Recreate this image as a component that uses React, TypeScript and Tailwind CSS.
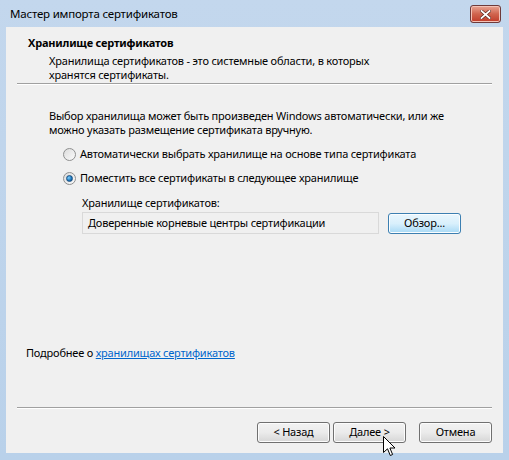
import React from "react";

const font = { fontFamily: '"Noto Sans", "Open Sans", sans-serif' };

const Radio = ({ checked }: { checked?: boolean }) => (
  <span className="relative inline-flex h-[13px] w-[13px] shrink-0 items-center justify-center rounded-full border border-[#8e8f8f] bg-gradient-to-br from-[#dcdcdc] to-[#fbfbfb]">
    {checked && (
      <span className="h-[7px] w-[7px] rounded-full border border-[#1b4f80] bg-[radial-gradient(circle_at_35%_35%,#7fd0ff,#1a73b8_60%,#0d4a86)]" />
    )}
  </span>
);

const WizButton = ({ children }: { children: React.ReactNode }) => (
  <button className="h-[21px] w-[73px] rounded-[3px] border border-[#707070] bg-gradient-to-b from-[#f2f2f2] via-[#ebebeb] to-[#d6d6d6] text-[11px] tracking-[-0.2px] text-black shadow-[inset_0_0_0_1px_#fcfcfc]">
    {children}
  </button>
);

const Separator = () => (
  <div className="mx-[11px] h-[2px] border-t border-[#a0a0a0] border-b border-b-white" />
);

export default function App() {
  return (
    <div
      className="relative flex h-[460px] w-[509px] flex-col bg-gradient-to-b from-[#c3d7ed] to-[#b9d1ea] text-[11px] tracking-[-0.2px] text-black"
      style={font}
    >
      {/* title bar */}
      <div className="flex h-[27px] items-center justify-between pl-[10px] pr-[8px]">
        <span className="text-[11.5px] text-black">Мастер импорта сертификатов</span>
        <button className="mt-[1px] flex h-[18px] w-[31px] items-center justify-center rounded-[3px] border border-[#6e3a3a] bg-gradient-to-b from-[#e8a493] via-[#d0644e] to-[#c03a28] shadow-[inset_0_0_0_1px_#f4c2b6]">
          <svg width="11" height="9" viewBox="0 0 11 9">
            <path d="M1.5 1 L9.5 8 M9.5 1 L1.5 8" stroke="#5a2a22" strokeWidth="3.2" strokeLinecap="square" />
            <path d="M1.5 1 L9.5 8 M9.5 1 L1.5 8" stroke="#ffffff" strokeWidth="1.8" strokeLinecap="square" />
          </svg>
        </button>
      </div>

      {/* client area */}
      <div className="mx-[6px] mb-[7px] flex flex-1 flex-col bg-[#f0f0f0]">
        <div className="pl-[22px] pt-[8px]">
          <div className="font-bold leading-[16px]">Хранилище сертификатов</div>
          <div className="mt-[3px] pl-[21px] leading-[14px]">
            Хранилища сертификатов - это системные области, в которых
            <br />
            хранятся сертификаты.
          </div>
        </div>
        <div className="mt-[1px]">
          <Separator />
        </div>

        <div className="pl-[43px] pt-[24px]">
          <div className="leading-[14px]">
            Выбор хранилища может быть произведен Windows автоматически, или же
            <br />
            можно указать размещение сертификата вручную.
          </div>

          <div className="mt-[10px] flex flex-col gap-[10px] pl-[14px]">
            <label className="flex items-center gap-[4px] leading-[14px]">
              <Radio />
              <span>Автоматически выбрать хранилище на основе типа сертификата</span>
            </label>
            <label className="flex items-center gap-[4px] leading-[14px]">
              <Radio checked />
              <span>Поместить все сертификаты в следующее хранилище</span>
            </label>
          </div>

          <div className="mt-[11px] pl-[33px]">
            <div className="leading-[14px]">Хранилище сертификатов:</div>
            <div className="mt-[2px] flex items-center gap-[9px]">
              <div className="flex h-[22px] w-[297px] items-center border border-[#d9d9d9] bg-[#f0f0f0] pl-[5px]">
                Доверенные корневые центры сертификации
              </div>
              <button className="h-[21px] w-[73px] rounded-[3px] border border-[#3c7fb1] bg-gradient-to-b from-[#eaf6fd] via-[#d9f0fc] to-[#a7d9f5] text-[11px] tracking-[-0.2px] shadow-[inset_0_0_0_1px_#fbfdfe]">
                Обзор...
              </button>
            </div>
          </div>
        </div>

        <div className="flex-1" />

        <div className="pb-[47px] pl-[20px] leading-[14px]">
          Подробнее о{" "}
          <a className="text-[#0066cc] underline" href="#">
            хранилищах сертификатов
          </a>
        </div>

        <Separator />

        <div className="flex justify-end gap-[3px] pr-[11px] pt-[13px] pb-[10px]">
          <WizButton>&lt; Назад</WizButton>
          <WizButton>Далее &gt;</WizButton>
          <div className="ml-[10px]">
            <WizButton>Отмена</WizButton>
          </div>
        </div>
      </div>

      {/* mouse pointer */}
      <svg className="absolute left-[383px] top-[436px]" width="13" height="21" viewBox="0 0 13 21">
        <path
          d="M0.5 0.5 L0.5 16.5 L4.5 12.8 L7.3 19.5 L9.6 18.5 L6.9 12 L12 12 Z"
          fill="#ffffff"
          stroke="#000000"
          strokeWidth="1"
          strokeLinejoin="miter"
        />
      </svg>
    </div>
  );
}
